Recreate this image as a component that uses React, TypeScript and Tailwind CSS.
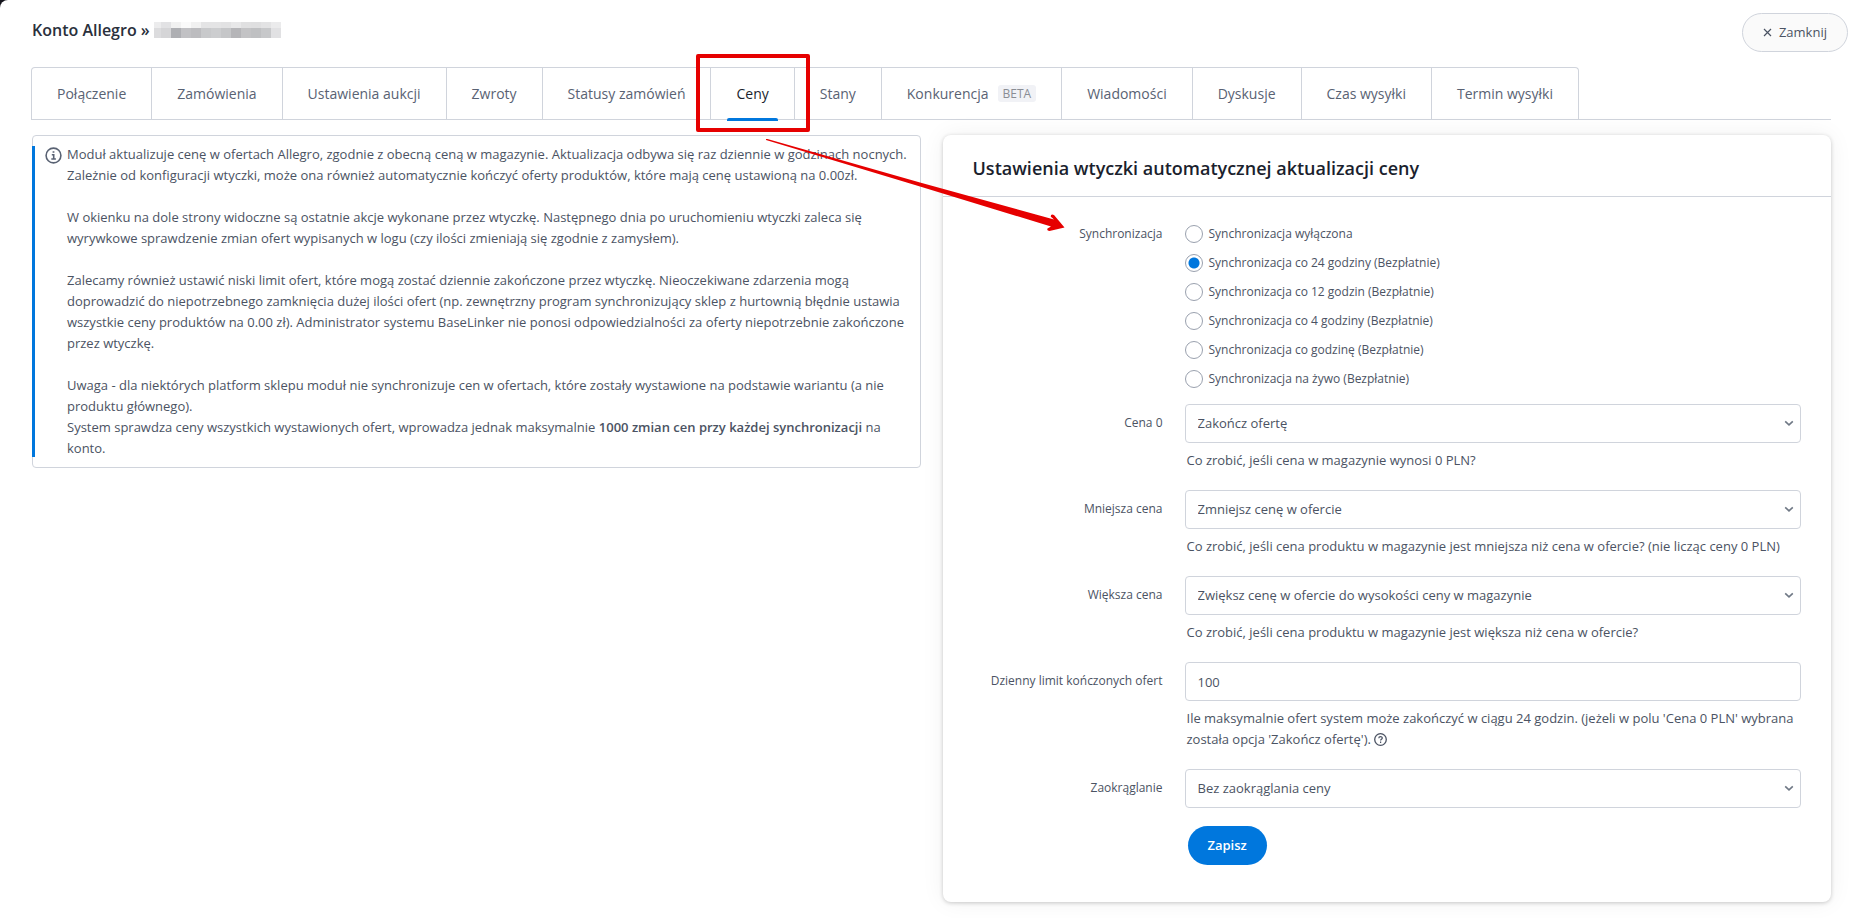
import { ReactNode, useState } from "react";

type Tab = { name: string; beta?: boolean };

const tabs: Tab[] = [
  { name: "Połączenie" },
  { name: "Zamówienia" },
  { name: "Ustawienia aukcji" },
  { name: "Zwroty" },
  { name: "Statusy zamówień" },
  { name: "Ceny" },
  { name: "Stany" },
  { name: "Konkurencja", beta: true },
  { name: "Wiadomości" },
  { name: "Dyskusje" },
  { name: "Czas wysyłki" },
  { name: "Termin wysyłki" },
];

const syncOptions = [
  "Synchronizacja wyłączona",
  "Synchronizacja co 24 godziny (Bezpłatnie)",
  "Synchronizacja co 12 godzin (Bezpłatnie)",
  "Synchronizacja co 4 godziny (Bezpłatnie)",
  "Synchronizacja co godzinę (Bezpłatnie)",
  "Synchronizacja na żywo (Bezpłatnie)",
];

// blurred account name, two rows of grey cells
const maskTop = ["#ececed", "#e2e2e4", "#f1f1f1", "#fafafa", "#f1f1f1", "#e4e4e5", "#e4e4e5", "#e2e2e3", "#e8e8e9", "#e0e0e1", "#dfdfe0", "#e3e3e4", "#ebebec"];
const maskBottom = ["#dcdcde", "#d5d5d7", "#aeafb3", "#c1c1c4", "#bcbcbf", "#c8c9cb", "#cccdcf", "#c5c6c8", "#b5b5b8", "#c3c3c5", "#bfc0c2", "#c7c8ca", "#e1e1e3"];

const AccountMask = () => (
  <svg width="127" height="16" viewBox="0 0 127 16" shapeRendering="crispEdges" aria-hidden="true">
    {maskTop.map((color, i) => (
      <rect key={i} x={i === 0 ? 0 : i * 10 - 3} y="0" width={i === 0 ? 7 : 10} height="6" fill={color} />
    ))}
    {maskBottom.map((color, i) => (
      <rect key={i} x={i === 0 ? 0 : i * 10 - 3} y="6" width={i === 0 ? 7 : 10} height="10" fill={color} />
    ))}
  </svg>
);

const TabItem = ({ tab, active, onClick }: { tab: Tab; active: boolean; onClick: () => void }) => (
  <li className="relative border-t border-r border-[#d0d4dc] first:rounded-tl first:border-l last:rounded-tr">
    <button
      type="button"
      onClick={onClick}
      className={`flex h-[51px] items-center px-[25px] text-sm ${active ? "text-[#1b1f2e]" : "text-[#596273]"}`}
    >
      {tab.name}
      {tab.beta && (
        <span className="ml-[9px] rounded-[3px] bg-[#f1f2f6] px-[5px] text-xs leading-[17px] text-[#8a8d94]">BETA</span>
      )}
    </button>
    {active && (
      <>
        <span className="absolute inset-x-4 -bottom-[2px] h-[3px] rounded-t-[2px] bg-[#0077dd]" />
        <span className="absolute -top-[14px] -right-4 -bottom-[13px] -left-[15px] z-10 rounded-[2px] border-4 border-[#e60000]" />
      </>
    )}
  </li>
);

const InfoBox = () => (
  <section className="relative self-start rounded border border-[#d0d4dc] py-2 pr-2 pl-[34px] text-[13px] leading-[21px]">
    <span className="absolute top-[10px] bottom-[10px] -left-px w-[3px] bg-[#0077dd]" />
    <svg className="absolute top-[11px] left-3" width="17" height="17" viewBox="0 0 17 17" fill="none" stroke="#596273">
      <circle cx="8.5" cy="8.5" r="7.4" strokeWidth="1.6" />
      <path d="M7.6 5h1.8M6.8 7.7h1.9v4M6.3 12h4.6" strokeWidth="1.6" />
    </svg>
    <p>
      Moduł aktualizuje cenę w ofertach Allegro, zgodnie z obecną ceną w magazynie. Aktualizacja odbywa się raz dziennie w godzinach nocnych. Zależnie od konfiguracji wtyczki, może ona również automatycznie kończyć oferty produktów, które mają cenę ustawioną na 0.00zł.
    </p>
    <p className="mt-[21px]">
      W okienku na dole strony widoczne są ostatnie akcje wykonane przez wtyczkę. Następnego dnia po uruchomieniu wtyczki zaleca się wyrywkowe sprawdzenie zmian ofert wypisanych w logu (czy ilości zmieniają się zgodnie z zamysłem).
    </p>
    <p className="mt-[21px]">
      Zalecamy również ustawić niski limit ofert, które mogą zostać dziennie zakończone przez wtyczkę. Nieoczekiwane zdarzenia mogą doprowadzić do niepotrzebnego zamknięcia dużej ilości ofert (np. zewnętrzny program synchronizujący sklep z hurtownią błędnie ustawia wszystkie ceny produktów na 0.00 zł). Administrator systemu BaseLinker nie ponosi odpowiedzialności za oferty niepotrzebnie zakończone przez wtyczkę.
    </p>
    <p className="mt-[21px]">
      Uwaga - dla niektórych platform sklepu moduł nie synchronizuje cen w ofertach, które zostały wystawione na podstawie wariantu (a nie produktu głównego).
    </p>
    <p>
      System sprawdza ceny wszystkich wystawionych ofert, wprowadza jednak maksymalnie{" "}
      <strong className="font-semibold">1000 zmian cen przy każdej synchronizacji</strong> na konto.
    </p>
  </section>
);

const Row = ({ label, htmlFor, help, children }: { label: string; htmlFor: string; help?: ReactNode; children: ReactNode }) => (
  <div className="flex gap-[22px]">
    <label htmlFor={htmlFor} className="w-[190px] shrink-0 text-right text-xs leading-[37px]">
      {label}
    </label>
    <div className="flex-1">
      {children}
      {help && <p className="mt-[7px] mb-[19px] pl-[2px] text-[13px] leading-[21px]">{help}</p>}
    </div>
  </div>
);

const Select = ({ id, value }: { id: string; value: string }) => (
  <div className="relative">
    <select
      id={id}
      className="block h-[39px] w-full appearance-none rounded border border-[#d0d4dc] bg-white px-3 text-[13px] text-[#4b5363]"
    >
      <option>{value}</option>
    </select>
    <svg className="pointer-events-none absolute top-4 right-[7px]" width="10" height="7" viewBox="0 0 10 7" fill="none">
      <path d="M1.2 1.3 5 4.8l3.8-3.5" stroke="#6f7885" strokeWidth="1.6" />
    </svg>
  </div>
);

const HelpIcon = () => (
  <svg className="inline align-[-2px]" width="13" height="13" viewBox="0 0 13 13" fill="none" stroke="#4b5363">
    <circle cx="6.5" cy="6.5" r="5.8" strokeWidth="1.3" />
    <path d="M4.8 5.3c0-2.2 3.5-2.1 3.5-.2 0 1.2-1.7 1.2-1.7 2.4M6.6 8.6v1.3" strokeWidth="1.2" />
  </svg>
);

// hand drawn pointer from the tab to the first setting
const Arrow = () => (
  <svg className="pointer-events-none absolute top-[139px] left-[766px] z-20" width="300" height="96" viewBox="0 0 300 96">
    <path
      d="M0 -.4 L154 43.500 L288 80.500 L284.800 77.800 Q284.500 74.500 288 76 L298.500 88.500 L283.500 92 Q280.500 91.500 281.500 89.500 L285 87.500 L154 47.500 L0 1 Z"
      fill="#e60000"
    />
  </svg>
);

const App = () => {
  const [activeTab, setActiveTab] = useState("Ceny");
  const [sync, setSync] = useState(1);

  return (
    <div className="bg-[#14141c] font-['Open_Sans',sans-serif] text-[#4b5363]">
      <main className="relative min-h-screen rounded-tl-lg bg-white pb-4">
        <header className="flex items-start justify-between pt-[13px] pr-[15px] pl-8">
          <h1 className="flex items-center gap-1 pt-1 text-base leading-[26px] font-semibold text-[#2a303c]">
            Konto Allegro » <AccountMask />
          </h1>
          <button
            type="button"
            className="flex h-[39px] items-center gap-[7px] rounded-full border border-[#d0d4dc] bg-[#fafafa] px-5 text-[13px] font-medium text-[#4b5363]"
          >
            <svg width="9" height="9" viewBox="0 0 9 9" stroke="#4b5363" strokeWidth="1.2">
              <path d="M1 1l7 7M8 1l-7 7" />
            </svg>
            Zamknij
          </button>
        </header>

        <div className="mr-8 ml-[31px]">
          <nav className="mt-[15px] border-b border-[#d0d4dc]">
            <ul className="flex">
              {tabs.map((tab) => (
                <TabItem key={tab.name} tab={tab} active={tab.name === activeTab} onClick={() => setActiveTab(tab.name)} />
              ))}
            </ul>
          </nav>

          <div className="mt-[15px] ml-px grid grid-cols-2 gap-[22px]">
            <InfoBox />

            <section className="rounded-lg bg-white pb-[37px] shadow-[0_1px_4px_rgba(0,0,0,0.2),0_0_24px_rgba(0,0,0,0.06)]">
              <h2 className="border-b border-[#d0d4dc] pt-5 pb-[14px] pl-[30px] text-lg leading-[27px] font-semibold text-[#1b1f2e]">
                Ustawienia wtyczki automatycznej aktualizacji ceny
              </h2>
              <form className="pt-7 pr-[30px] pl-[30px]" onSubmit={(e) => e.preventDefault()}>
                <fieldset className="mb-4 flex gap-[22px]">
                  <legend className="float-left w-[190px] shrink-0 text-right text-xs leading-[18px]">Synchronizacja</legend>
                  <div className="flex flex-col gap-[11px]">
                    {syncOptions.map((option, i) => (
                      <label key={option} className="flex h-[18px] items-center gap-[6px] text-xs">
                        <input
                          type="radio"
                          name="sync"
                          checked={sync === i}
                          onChange={() => setSync(i)}
                          className="size-[18px] appearance-none rounded-full border border-[#9aa1ae] bg-white checked:bg-[radial-gradient(circle,#0077dd_5px,transparent_6px)]"
                        />
                        {option}
                      </label>
                    ))}
                  </div>
                </fieldset>

                <Row label="Cena 0" htmlFor="zero" help="Co zrobić, jeśli cena w magazynie wynosi 0 PLN?">
                  <Select id="zero" value="Zakończ ofertę" />
                </Row>
                <Row
                  label="Mniejsza cena"
                  htmlFor="lower"
                  help="Co zrobić, jeśli cena produktu w magazynie jest mniejsza niż cena w ofercie? (nie licząc ceny 0 PLN)"
                >
                  <Select id="lower" value="Zmniejsz cenę w ofercie" />
                </Row>
                <Row
                  label="Większa cena"
                  htmlFor="higher"
                  help="Co zrobić, jeśli cena produktu w magazynie jest większa niż cena w ofercie?"
                >
                  <Select id="higher" value="Zwiększ cenę w ofercie do wysokości ceny w magazynie" />
                </Row>
                <Row
                  label="Dzienny limit kończonych ofert"
                  htmlFor="limit"
                  help={
                    <>
                      Ile maksymalnie ofert system może zakończyć w ciągu 24 godzin. (jeżeli w polu 'Cena 0 PLN' wybrana została opcja 'Zakończ ofertę'). <HelpIcon />
                    </>
                  }
                >
                  <input
                    id="limit"
                    type="text"
                    defaultValue="100"
                    className="block h-[39px] w-full rounded border border-[#d0d4dc] px-3 text-[13px] text-[#4b5363]"
                  />
                </Row>
                <Row label="Zaokrąglanie" htmlFor="rounding">
                  <Select id="rounding" value="Bez zaokrąglania ceny" />
                  <button
                    type="submit"
                    className="mt-[18px] ml-[3px] h-[39px] rounded-full bg-[#0077dd] px-5 text-[13px] font-semibold text-white"
                  >
                    Zapisz
                  </button>
                </Row>
              </form>
            </section>
          </div>
        </div>
        <Arrow />
      </main>
    </div>
  );
};

export default App;
